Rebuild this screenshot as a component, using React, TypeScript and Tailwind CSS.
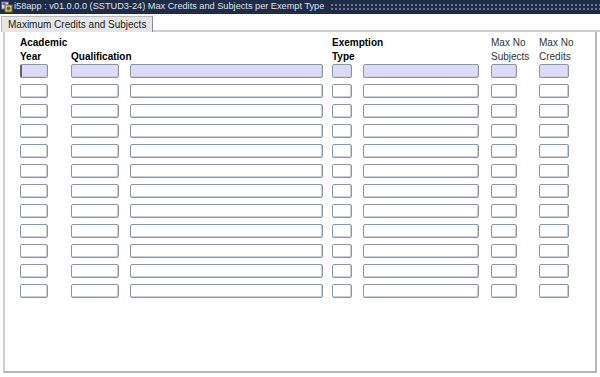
const cols = [
  { cls: 'ml-[15px] w-[28px]' },
  { cls: 'ml-[23px] w-[48px]' },
  { cls: 'ml-[11px] w-[193px]' },
  { cls: 'ml-[9px] w-[20px]' },
  { cls: 'ml-[11px] w-[116px]' },
  { cls: 'ml-[12px] w-[26px]' },
  { cls: 'ml-[22px] w-[30px]' },
];

const rows = Array.from({ length: 12 }, (_, i) => i);

function Field({ cls, active, cursor }: { cls: string; active: boolean; cursor?: boolean }) {
  return (
    <div
      className={`${cls} h-[14px] shrink-0 rounded-[2px] border border-[#8d95a8] shadow-[inset_-1px_-1px_0_#c9ced8] ${
        active ? 'bg-[#dcdcfa]' : 'bg-white'
      } ${cursor ? 'border-l-2 border-l-[#5a6274]' : ''}`}
    />
  );
}

function AppIcon() {
  return (
    <svg width="12" height="12" viewBox="0 0 12 12" className="shrink-0">
      <rect x="0.5" y="1" width="7" height="7" fill="#c9d8f2" stroke="#4a6aa8" strokeWidth="1" />
      <rect x="4" y="4" width="7" height="7" fill="#e8c86a" stroke="#8a5a20" strokeWidth="1" />
      <circle cx="7.5" cy="7.5" r="2" fill="#3b7a3b" />
      <rect x="1.5" y="2" width="3" height="2" fill="#d04040" />
    </svg>
  );
}

export default function App() {
  return (
    <div className="w-[600px] h-[377px] bg-white overflow-hidden flex flex-col font-['Liberation_Sans',Arial,sans-serif] text-[10px] text-black">
      <div className="h-[14px] shrink-0 bg-[#1f2c47] flex items-center pl-[1px]">
        <AppIcon />
        <span className="ml-[1px] text-[9.2px] text-[#dfe3ea] whitespace-nowrap leading-none">
          i58app : v01.0.0.0 (SSTUD3-24) Max Credits and Subjects per Exempt Type
        </span>
        <div className="ml-[6px] flex-1 h-[8px] bg-[radial-gradient(circle,#6f7b93_0.7px,transparent_0.9px)] bg-[length:4px_4px]" />
      </div>

      <div className="h-[18px] shrink-0 flex items-end">
        <div className="h-[16px] ml-[1px] px-[6px] flex items-center bg-[#e6e6e6] border border-b-0 border-[#b8b8b8] border-r-[#8e8e8e] whitespace-nowrap text-[#222]">
          Maximum Credits and Subjects
        </div>
        <div className="flex-1 border-b-2 border-[#cfcfcf]" />
      </div>

      <div className="ml-[3px] mr-[3px] h-[341px] border-2 border-t-0 border-[#cfcfcf] border-r-[#b5b5b5] border-b-[#b5b5b5] bg-white">
        <div className="flex pt-[4px] leading-[14px]">
          <div className={`${cols[0].cls} font-bold whitespace-nowrap`}>
            <div>Academic</div>
            <div>Year</div>
          </div>
          <div className={`${cols[1].cls} font-bold whitespace-nowrap`}>
            <div>&nbsp;</div>
            <div>Qualification</div>
          </div>
          <div className={`${cols[2].cls}`} />
          <div className={`${cols[3].cls} font-bold whitespace-nowrap`}>
            <div>Exemption</div>
            <div>Type</div>
          </div>
          <div className={`${cols[4].cls}`} />
          <div className={`${cols[5].cls} whitespace-nowrap text-[#333]`}>
            <div>Max No</div>
            <div>Subjects</div>
          </div>
          <div className={`${cols[6].cls} whitespace-nowrap text-[#333]`}>
            <div>Max No</div>
            <div>Credits</div>
          </div>
        </div>

        <div className="flex flex-col gap-[6px]">
          {rows.map((r) => (
            <div key={r} className="flex">
              {cols.map((c, i) => (
                <Field key={i} cls={c.cls} active={r === 0} cursor={r === 0 && i === 0} />
              ))}
            </div>
          ))}
        </div>
      </div>
    </div>
  );
}
